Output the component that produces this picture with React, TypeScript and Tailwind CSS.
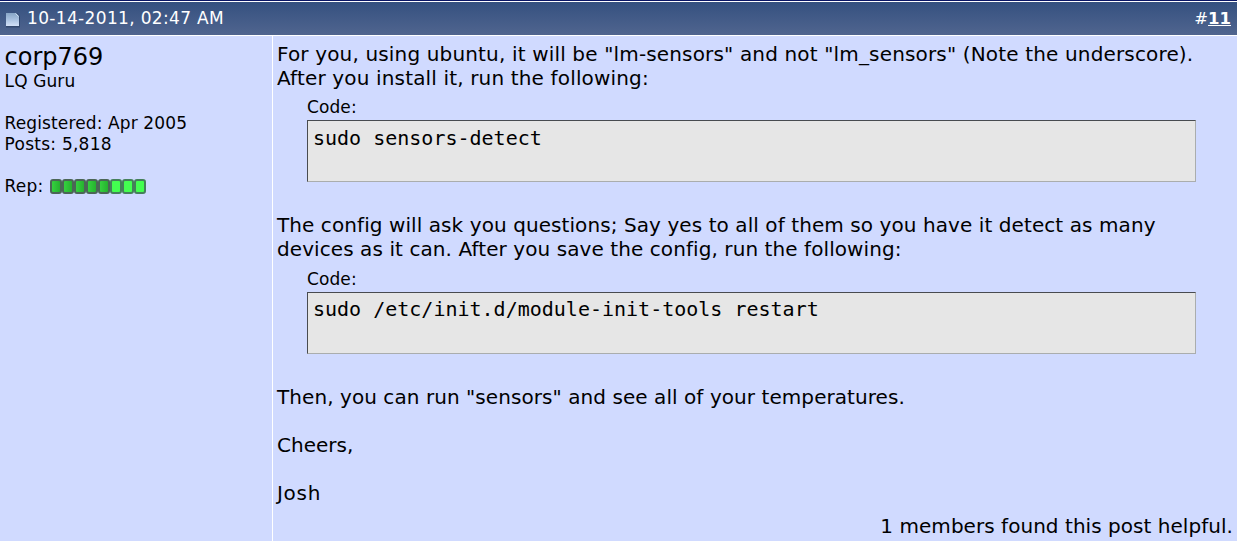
const REP_BARS = ["mid", "mid", "mid", "mid", "mid", "high", "high", "high"] as const;

function PostIcon() {
  return (
    <svg width="15" height="16" viewBox="0 0 15 16" aria-hidden="true">
      <defs>
        <linearGradient id="page" x1="0" y1="0" x2="0" y2="1">
          <stop offset="0" stopColor="#87a5c6" />
          <stop offset="0.5" stopColor="#a9c1e0" />
          <stop offset="1" stopColor="#d3e1f8" />
        </linearGradient>
      </defs>
      <path d="M1 1h11l3 3v11.500H1z" fill="#273b5e" opacity="0.6" />
      <path d="M1 1h10L14 4v10H1z" fill="url(#page)" />
      <path d="M10.500 1.500L13.500 4.500" stroke="#c9dcf0" strokeWidth="1" />
    </svg>
  );
}

function CodeBlock({ code }: { code: string }) {
  return (
    <div className="mr-[37px] ml-[30px]">
      <div className="h-[21px] pt-px text-[17px] leading-[21px] tracking-[0.1px]">Code:</div>
      <pre className="mt-[3px] h-[62px] border border-t-[#484b50] border-r-[#aaadad] border-b-[#aaadad] border-l-[#484b50] bg-[#e6e6e6] px-[5px] pt-[5px] font-['DejaVu_Sans_Mono',monospace] text-[20px] leading-6">
        {code}
      </pre>
    </div>
  );
}

export default function App() {
  return (
    <div className="flex h-[541px] w-[1237px] flex-col overflow-hidden bg-[#d0daff] font-['DejaVu_Sans',Verdana,sans-serif] text-black">
      <header className="flex h-9 shrink-0 items-center justify-between border-t border-b border-t-[#0b1665] border-b-white bg-linear-to-b from-[#34507f] to-[#50658f] pr-[6px] pl-[5px] text-[16.500px] text-white shadow-[inset_0_1px_0_#fff]">
        <div className="flex items-center gap-[7px] pt-px">
          <div className="mt-[2px]">
            <PostIcon />
          </div>
          <span className="text-[17px] tracking-[0.34px]">10-14-2011, 02:47 AM</span>
        </div>
        <div className="pt-[2px]">
          #<a className="font-bold underline">11</a>
        </div>
      </header>

      <div className="flex flex-1">
        <aside className="w-[273px] shrink-0 border-r border-white pt-[6px] pl-[4.600px] text-[17px] leading-[21px]">
          <div className="h-[29px] text-[24px] leading-[30px]">corp769</div>
          <div className="tracking-[0.1px]">LQ Guru</div>
          <div className="mt-[21px] tracking-[0.12px]">Registered: Apr 2005</div>
          <div className="tracking-[0.25px]">Posts: 5,818</div>
          <div className="mt-[21px] flex items-center">
            <span className="w-[45.400px] tracking-[0.2px]">Rep:</span>
            <span className="flex">
              {REP_BARS.map((level, i) => (
                <span
                  key={i}
                  className={`h-[15px] w-3 rounded-[3px] border-2 ${
                    level === "high"
                      ? "border-[#45805a] bg-[#43ff50]"
                      : "border-[#4b6656] bg-linear-to-r from-[#35d13f] to-[#26b22f]"
                  }`}
                />
              ))}
            </span>
          </div>
        </aside>

        <main className="flex flex-1 flex-col pt-[6px] pr-1 pl-1 text-[20px] leading-6">
          <p className="tracking-[0.155px] whitespace-nowrap">
            For you, using ubuntu, it will be "lm-sensors" and not "lm_sensors" (Note the underscore).
            <br />
            After you install it, run the following:
          </p>
          <div className="mt-[6px]">
            <CodeBlock code="sudo sensors-detect" />
          </div>
          <p className="mt-[31px] tracking-[0.08px] whitespace-nowrap">
            The config will ask you questions; Say yes to all of them so you have it detect as many
            <br />
            devices as it can. After you save the config, run the following:
          </p>
          <div className="mt-[7px] [&_pre]:pt-1">
            <CodeBlock code="sudo /etc/init.d/module-init-tools restart" />
          </div>
          <p className="mt-[31px] tracking-[0.065px]">
            Then, you can run "sensors" and see all of your temperatures.
          </p>
          <p className="mt-6">Cheers,</p>
          <p className="mt-6 tracking-[0.7px]">Josh</p>
          <p className="mt-[9px] text-right tracking-[0.04px]">1 members found this post helpful.</p>
        </main>
      </div>
    </div>
  );
}
